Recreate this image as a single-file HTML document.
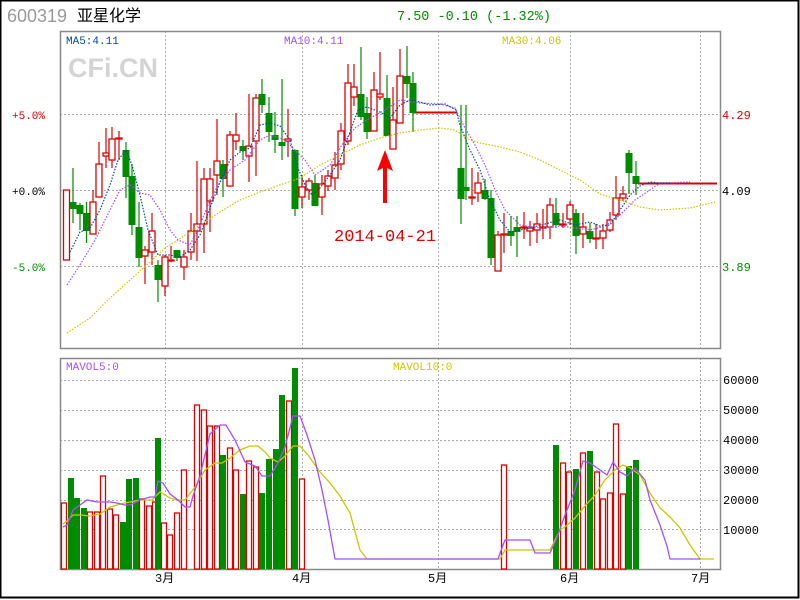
<!DOCTYPE html>
<html><head><meta charset="utf-8"><style>
html,body{margin:0;padding:0;background:#fff;}
#w{position:relative;width:800px;height:600px;overflow:hidden;}
svg{position:absolute;left:0;top:0;}
.m{font-family:"Liberation Mono","Noto Sans CJK SC",monospace;}
.s{font-family:"Liberation Sans","Noto Sans CJK SC",sans-serif;}
</style></head><body><div id="w">
<svg id="s" width="800" height="600" viewBox="0 0 800 600" xmlns="http://www.w3.org/2000/svg">
<rect x="0.5" y="0.5" width="798" height="597" fill="#fff" stroke="#000" stroke-width="2"/>
<text class="s" x="7" y="22" font-size="18" fill="#999">600319</text>
<text class="s" x="77" y="21" font-size="16" fill="#000">亚星化学</text>
<text class="m" x="397" y="20" font-size="13.5" fill="#008c00">7.50 -0.10 (-1.32%)</text>
<g stroke="#aaa" stroke-dasharray="2,2" stroke-width="1">
<line x1="60" y1="114.5" x2="720" y2="114.5"/><line x1="60" y1="190.5" x2="720" y2="190.5"/><line x1="60" y1="266.5" x2="720" y2="266.5"/>
<line x1="165.5" y1="31" x2="165.5" y2="348"/><line x1="302.5" y1="31" x2="302.5" y2="348"/><line x1="438.5" y1="31" x2="438.5" y2="348"/><line x1="570.5" y1="31" x2="570.5" y2="348"/><line x1="700.5" y1="31" x2="700.5" y2="348"/>
<line x1="60" y1="380.5" x2="720" y2="380.5"/><line x1="60" y1="410.5" x2="720" y2="410.5"/><line x1="60" y1="440.5" x2="720" y2="440.5"/><line x1="60" y1="470.5" x2="720" y2="470.5"/><line x1="60" y1="500.5" x2="720" y2="500.5"/><line x1="60" y1="529.5" x2="720" y2="529.5"/>
<line x1="165.5" y1="358" x2="165.5" y2="569"/><line x1="302.5" y1="358" x2="302.5" y2="569"/><line x1="438.5" y1="358" x2="438.5" y2="569"/><line x1="570.5" y1="358" x2="570.5" y2="569"/><line x1="700.5" y1="358" x2="700.5" y2="569"/>
</g>
<rect x="60.5" y="31.5" width="660" height="317" fill="none" stroke="#888" stroke-width="1.5"/>
<rect x="60.5" y="358.5" width="660" height="211" fill="none" stroke="#888" stroke-width="1.5"/>
<text class="s" x="68" y="77" font-weight="bold" font-size="27" fill="#d4d4d4">CFi.CN</text>
<g class="m">
<text x="66" y="44" font-size="11" fill="#004c99">MA5:4.11</text>
<text x="284" y="44" font-size="11" fill="#a64dff">MA10:4.11</text>
<text x="502" y="44" font-size="11" fill="#c8c800">MA30:4.06</text>
<text x="66" y="370" font-size="11" fill="#a64dff">MAVOL5:0</text>
<text x="393" y="370" font-size="11" fill="#c8c800">MAVOL10:0</text>
<text x="12" y="119" font-size="11" fill="#d00">+5.0%</text>
<text x="12" y="195" font-size="11" fill="#000">+0.0%</text>
<text x="12" y="271" font-size="11" fill="#008c00">-5.0%</text>
<text x="722" y="119" font-size="12" fill="#d00">4.29</text>
<text x="722" y="195" font-size="12" fill="#000">4.09</text>
<text x="722" y="271" font-size="12" fill="#008c00">3.89</text>
</g>
<g class="m" font-size="12" fill="#000">
<text x="723" y="384">60000</text><text x="723" y="414">50000</text><text x="723" y="444">40000</text><text x="723" y="474">30000</text><text x="723" y="504">20000</text><text x="723" y="534">10000</text>
<text x="155" y="582">3月</text><text x="292" y="582">4月</text><text x="428" y="582">5月</text><text x="560" y="582">6月</text><text x="691" y="582">7月</text>
</g>
<g id="c"></g>
<g fill="none" stroke-width="1.2" stroke-dasharray="1.5,1.5">
<polyline stroke="#c8c800" points="67,333 90,318 110,298 130,280 150,262 165,248 178,240 190,232 200,225 220,212 240,200 260,192 280,185 300,178 320,165 340,155 360,145 380,138 400,133 420,130 440,128 455,130 470,140 480,143 500,147 520,152 540,160 560,170 580,180 600,194 620,200 640,207 660,210 690,208 715,202"/>
<polyline stroke="#a64dff" points="67,285 80,265 95,240 110,210 120,190 130,185 140,193 150,195 160,210 170,230 178,240 190,245 200,225 210,200 220,182 230,170 245,160 260,140 270,135 285,140 295,150 305,160 315,175 330,165 345,140 355,128 370,118 385,110 400,100 420,103 440,104 455,108 465,128 475,145 485,165 495,190 505,210 520,225 540,228 560,226 575,228 590,230 605,226 620,215 635,200 650,190 660,183 690,182"/>
<polyline stroke="#004c99" points="70,252 80,232 90,228 100,210 110,185 118,160 126,150 132,165 140,195 148,230 158,255 170,255 180,257 190,250 200,235 210,208 220,182 230,160 240,152 250,148 260,125 270,123 280,126 290,140 298,168 305,185 312,195 320,188 330,175 340,160 350,132 358,110 367,107 380,112 390,118 400,105 410,100 420,102 430,105 445,104 456,110 460,125 470,150 480,170 490,200 500,220 510,232 520,230 530,228 545,224 560,220 575,225 590,222 600,226 610,225 620,210 630,195 640,186 650,182 660,183 670,183"/>
</g>
<g fill="none" stroke-width="1.3">
<polyline stroke="#c8c800" points="63,524 67,521 73,515 80,515 90,516 100,514 110,507 125,503 140,500 152,500 160,492 170,498 177,500 185,500 195,487 205,470 215,463 222,463 230,458 240,450 250,446 258,446 265,452 270,458 278,462 285,456 293,446 300,446 308,455 320,472 330,483 340,496 350,513 360,550 367,559 500,559 505,550 550,550 555,540 560,530 565,527 575,518 585,506 595,495 605,480 615,470 623,465 630,468 640,475 650,493 660,508 670,517 680,528 690,545 700,559 714,559"/>
<polyline stroke="#a64dff" points="63,527 67,525 73,510 87,500 97,502 110,502 117,503 125,505 130,505 140,500 150,497 155,497 158,481 163,483 170,494 178,500 185,507 190,507 193,496 200,476 210,434 220,425 226,425 235,440 245,462 255,466 262,476 270,476 278,463 285,447 293,416 300,416 307,435 315,460 322,490 328,520 333,548 335,559 498,559 503,545 505,540 530,540 535,553 550,553 556,540 565,515 575,490 583,461 590,463 600,470 607,475 613,462 620,472 627,476 635,468 645,480 650,500 660,525 667,546 670,559 700,559"/>
</g>
<polygon points="385,150 393,171 387,168 387,203 383,203 383,168 377,171" fill="#f00"/>
<text class="m" x="334" y="241" font-size="17" fill="#d00">2014-04-21</text>
</svg>
<script>
var C=[[66.5,190,190,260,260,'r'],[73,168,202,208,223,'g'],[80,203,205,213,230,'g'],[86.5,202,213,230,243,'g'],[93,190,202,234,234,'r'],[99,142,164,197,197,'r'],[106,128,153,156,168,'r'],[112,127,139,160,168,'r'],[119,131,138,139,160,'r'],[126,142,150,176,198,'g'],[132,164,176,224,235,'g'],[139,202,227,257,267,'g'],[145,246,250,256,284,'r'],[152,213,231,252,265,'r'],[158,260,265,279,302,'g'],[165,255,257,286,296,'r'],[171,246,260,261,262,'r'],[177,250,250,257,261,'g'],[184,250,257,267,280,'r'],[191,213,231,252,260,'r'],[197,161,224,231,261,'r'],[204,168,179,224,253,'r'],[210,168,179,201,232,'r'],[217,119,161,175,195,'r'],[223,160,164,178,197,'g'],[230,131,135,186,186,'r'],[236,113,135,141,150,'r'],[243,140,146,150,160,'g'],[249,94,146,156,182,'r'],[256,94,98,141,176,'r'],[262,79,94,104,113,'g'],[269,97,113,131,142,'g'],[275,112,135,139,153,'g'],[282,79,142,145,160,'g'],[288,109,139,141,157,'r'],[295,150,150,208,216,'g'],[302,175,187,197,208,'r'],[309,178,181,190,200,'r'],[315,175,183,205,206,'g'],[322,175,184,197,215,'r'],[328,170,176,186,191,'r'],[335,152,165,178,190,'r'],[341,123,131,164,170,'r'],[348,64,83,141,145,'r'],[354,64,87,97,106,'r'],[361,47,94,116,120,'g'],[367,97,113,131,139,'g'],[374,72,90,131,131,'r'],[380,52,94,97,100,'r'],[387,75,98,135,135,'g'],[393,87,120,149,149,'r'],[400,49,76,123,123,'r'],[407,46,76,83,98,'g'],[413,72,83,112,132,'g'],[461,105,168,198,224,'g'],[466,105,187,190,200,'g'],[472,168,197,197,205,'r'],[478,172,183,193,202,'r'],[485,179,190,198,200,'g'],[491,190,198,257,265,'g'],[498,231,235,271,271,'r'],[504,213,234,235,253,'r'],[511,216,231,235,246,'g'],[517,216,227,231,257,'g'],[524,212,227,228,239,'r'],[530,221,228,231,246,'r'],[537,213,224,230,243,'r'],[543,209,227,228,239,'r'],[550,198,205,227,239,'r'],[556,198,213,224,228,'g'],[563,213,224,225,228,'r'],[570,201,205,219,225,'r'],[576,209,213,235,254,'g'],[583,213,227,234,248,'r'],[590,223,231,238,243,'g'],[596,224,238,239,249,'r'],[603,224,231,238,249,'r'],[610,212,220,230,232,'r'],[616,176,198,215,220,'r'],[623,186,194,198,201,'r'],[629,150,153,172,194,'g'],[636,161,176,183,195,'g']];
var V=[[64,503,'r'],[71,478,'g'],[77,498,'g'],[84,508,'g'],[90,512,'r'],[97,512,'r'],[103,476,'r'],[110,509,'r'],[116,515,'r'],[123,522,'g'],[129,479,'g'],[136,478,'g'],[142,499,'r'],[149,506,'r'],[155,502,'r'],[158,438,'g'],[164,523,'r'],[170,535,'r'],[177,513,'r'],[184,470,'r'],[197,405,'r'],[204,410,'r'],[210,426,'r'],[217,426,'r'],[223,455,'g'],[230,448,'r'],[236,470,'r'],[243,494,'g'],[249,461,'r'],[256,467,'r'],[262,493,'g'],[269,459,'g'],[276,449,'g'],[282,395,'g'],[289,401,'r'],[295,368,'g'],[302,479,'r'],[504,465,'r'],[556,445,'g'],[563,463,'r'],[569,472,'r'],[576,469,'g'],[583,453,'r'],[590,451,'g'],[597,472,'r'],[603,499,'r'],[610,493,'r'],[616,424,'r'],[623,494,'r'],[629,466,'g'],[636,460,'g']];
var R='#dd0000',G='#008c00',h='';
h+='<line x1="413" y1="112.5" x2="457" y2="112.5" stroke="'+R+'" stroke-width="2"/>';
h+='<line x1="638" y1="183.5" x2="717" y2="183.5" stroke="'+R+'" stroke-width="2"/>';
C.forEach(function(c){var x=c[0],col=c[5]=='r'?R:G;
h+='<line x1="'+x+'" y1="'+c[1]+'" x2="'+x+'" y2="'+c[4]+'" stroke="'+col+'" stroke-width="1.2"/>';
var hh=Math.max(c[3]-c[2],1);
if(c[5]=='r')h+='<rect x="'+(x-3)+'" y="'+c[2]+'" width="6" height="'+hh+'" fill="#fff" stroke="'+R+'" stroke-width="1.3"/>';
else h+='<rect x="'+(x-3.5)+'" y="'+c[2]+'" width="7" height="'+(hh+1)+'" fill="'+G+'"/>';});
V.forEach(function(v){var x=v[0];
if(v[2]=='r')h+='<rect x="'+(x-2.5)+'" y="'+v[1]+'" width="5" height="'+(569-v[1])+'" fill="#fff" stroke="'+R+'" stroke-width="1.3"/>';
else h+='<rect x="'+(x-3)+'" y="'+v[1]+'" width="6" height="'+(569-v[1])+'" fill="'+G+'"/>';});
document.getElementById('c').innerHTML=h;
</script>
</div></body></html>
